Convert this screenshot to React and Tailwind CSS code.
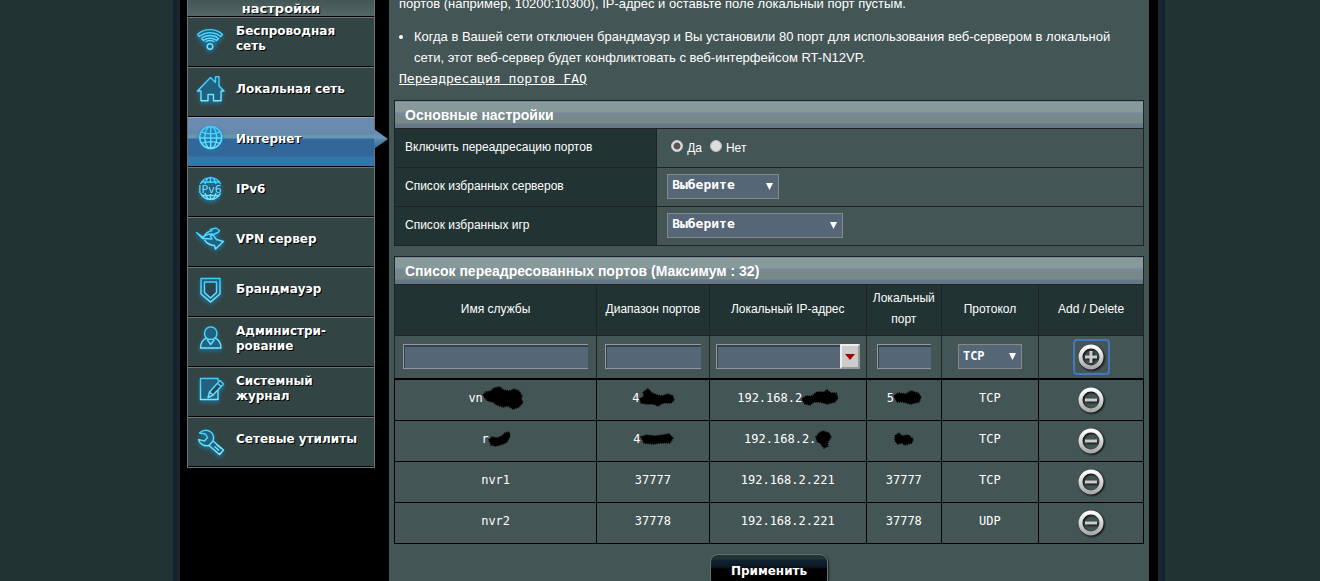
import React, { useState } from 'react';
import clsx from 'clsx';

const ICON_STROKE = 'url(#icon-line)';

const icons = {
    wifi: (
        <>
            <path d="M1 8 Q14 -1 27 8 L16 24 L12 24 Z" fill="#1d5f80" fillOpacity="0.55" stroke="none" />
            <path d="M1.5 8.5 C8 2 20 2 26.5 8.5 L24.5 10.5 C19 5.5 9 5.5 3.5 10.5 Z" />
            <path d="M5.5 12.5 C10 8.5 18 8.5 22.5 12.5 L20.5 14.5 C17 11.5 11 11.5 7.500 14.5 Z" />
            <path d="M9.5 16 C12 14 16 14 18.500 16" />
            <circle cx="14" cy="20.500" r="2.800" />
        </>
    ),
    home: (
        <>
            <path d="M5 12 L14.5 2 L25 12 L25 25 L5 25 Z" fill="#1d5f80" fillOpacity="0.55" stroke="none" />
            <path d="M5 15 H1.500 L14.500 1.500 L19.500 6.500 V0.800 H23 V10 L28 15 H25 V24.800 H17.500 V18.500 H12 V24.800 H5 Z" />
        </>
    ),
    globe: (
        <>
            <circle cx="14.700" cy="11.500" r="11" fill="#1d7fc0" fillOpacity="0.35" />
            <ellipse cx="14.700" cy="11.500" rx="6" ry="11" />
            <path d="M14.700 0.500 V22.500 M5.500 6 C10 8.500 19.500 8.500 24 6 M3.700 12 H25.700 M5.500 17.500 C10 15 19.500 15 24 17.500" />
        </>
    ),
    ipv6: (
        <>
            <circle cx="14.500" cy="12.500" r="11" fill="#1d5f80" fillOpacity="0.55" stroke="none" />
            <path d="M4.500 8 A11 11 0 0 1 24.500 8 M4.500 17 A11 11 0 0 0 24.500 17 M9 8 C10 4 12 1.500 14.500 1.500 C17 1.500 19 4 20 8 M9 17 C10 21 12 23.500 14.500 23.500 C17 23.500 19 21 20 17 M14.500 1.500 V7 M14.500 18 V23.500 M5 6 H24 M5 19.500 H24" />
            <text
                x="14"
                y="16.500"
                textAnchor="middle"
                fill="#77ddff"
                stroke="none"
                className="font-['DejaVu_Sans',sans-serif] text-[11px]"
            >
                IPv6
            </text>
        </>
    ),
    vpn: (
        <>
            <path d="M6 11 L20 2 L23 7 L18 9 L28 14 L20 22 Z" fill="#1d5f80" fillOpacity="0.55" stroke="none" />
            <path d="M0.500 6.500 L6.500 12.500 C8.500 9.500 11 8 15 8 L17.500 8.500 L22 6.500 L23.500 4.500 L20 2 L14.500 3.500 L16 4.500 C11.500 5.500 9 7.500 7.500 11.500 Z" />
            <path d="M6.500 12.500 L16 13 L14.500 10 L17 9 L20.500 13.500 L27.500 15.500 L19.500 23 L18.500 19.500 C13.500 19 10.500 17 8.500 14" />
        </>
    ),
    shield: (
        <>
            <path d="M5 2.500 H24 V18 L14.500 26 L5 18 Z" fill="#1d5f80" fillOpacity="0.55" />
            <path d="M8.500 6 H20.500 V16.500 L14.500 22 L8.500 16.500 Z" fill="#2b4650" />
        </>
    ),
    user: (
        <>
            <path d="M4.500 22 C4.500 16 7 13.500 10.500 12 C7 8.500 8.500 1 14.700 1 C21 1 22.500 8.500 19 12 C22.500 13.500 25 16 25 22 Z" fill="#1d5f80" fillOpacity="0.55" />
            <path d="M10.500 12 C13 13.800 16.500 13.800 19 12 M11 13.500 L14.700 18.500 L18.500 13.500" />
        </>
    ),
    journal: (
        <>
            <path d="M22 12 V23.500 H4.500 V2.500 H22 V5" fill="#1d5f80" fillOpacity="0.55" />
            <path d="M12 21.500 L13.500 16 L24 4.500 L27.500 8 L17 19 Z M21.500 7 L25 10.500 M13.500 16 L17 19" fill="#2b4650" />
        </>
    ),
    wrench: (
        <>
            <path d="M3.500 7 C8 2.500 15 4 17 9 C18 11.500 17.500 13.500 17 15 L27.500 24 L23.500 28.500 L13 19.500 C8.500 20.500 3.500 18 2.500 13.500 L8.500 15 L11.500 11.500 L9.500 8 Z" fill="#1d5f80" fillOpacity="0.55" />
            <path d="M17 15 L13 19.500 M18.500 20.500 L23 24.500 M20.500 18.500 L25 22.500" />
        </>
    ),
};

const menu = [
    { icon: 'wifi', label: 'Беспроводная сеть' },
    { icon: 'home', label: 'Локальная сеть' },
    { icon: 'globe', label: 'Интернет', active: true },
    { icon: 'ipv6', label: 'IPv6' },
    { icon: 'vpn', label: 'VPN сервер' },
    { icon: 'shield', label: 'Брандмауэр' },
    { icon: 'user', label: 'Администри- рование' },
    { icon: 'journal', label: 'Системный журнал' },
    { icon: 'wrench', label: 'Сетевые утилиты' },
];

// Ink blots that hide private values
const blots = {
    wide: { w: 40, h: 22, d: 'M0 8 L3 5 L8 4 L11 1 L17 0 L20 3 L27 4 L31 2 L36 4 L39 9 L38 12 L40 15 L36 20 L30 22 L25 19 L20 20 L14 18 L10 15 L5 14 L2 11 Z' },
    hump: { w: 34, h: 18, d: 'M0 10 L4 7 L3 3 L8 0 L12 4 L17 6 L22 7 L28 5 L33 7 L34 11 L31 14 L23 14 L18 17 L13 15 L7 15 L1 14 Z' },
    tail: { w: 36, h: 16, d: 'M0 9 L4 6 L10 6 L15 2 L22 2 L25 0 L29 3 L34 3 L36 8 L33 12 L25 14 L18 12 L12 12 L8 15 L3 14 Z' },
    oval: { w: 27, h: 13, d: 'M0 5 L4 2 L12 3 L17 0 L24 2 L27 6 L25 11 L17 13 L9 11 L3 11 Z' },
    leaf: { w: 21, h: 14, d: 'M0 8 L3 5 L8 6 L13 4 L16 1 L20 0 L21 4 L18 10 L14 12 L7 14 L2 13 Z' },
    bar: { w: 32, h: 10, d: 'M0 3 L5 1 L14 2 L22 1 L28 0 L32 4 L29 9 L20 9 L12 10 L3 9 Z' },
    ball: { w: 15, h: 17, d: 'M0 6 L3 2 L7 0 L13 2 L15 6 L12 11 L12 15 L8 17 L5 13 L1 10 Z' },
    dot: { w: 18, h: 12, d: 'M0 3 L4 0 L7 3 L13 2 L18 6 L17 10 L10 12 L7 10 L3 11 L0 8 Z' },
};

const rows = [
    { name: 'vn', nameBlot: 'wide', range: '4', rangeBlot: 'hump', ip: '192.168.2', ipBlot: 'tail', port: '5', portBlot: 'oval', proto: 'TCP' },
    { name: 'r', nameBlot: 'leaf', range: '4', rangeBlot: 'bar', ip: '192.168.2.', ipBlot: 'ball', port: '', portBlot: 'dot', proto: 'TCP' },
    { name: 'nvr1', range: '37777', ip: '192.168.2.221', port: '37777', proto: 'TCP' },
    { name: 'nvr2', range: '37778', ip: '192.168.2.221', port: '37778', proto: 'UDP' },
];

const MenuIcon = ({ name }) => (
    <svg
        viewBox="0 0 30 32"
        fill="none"
        stroke={ICON_STROKE}
        strokeWidth="1.4"
        strokeLinejoin="round"
        className="w-[30px] h-8 shrink-0 overflow-visible drop-shadow-[0_2px_2px_#1a7fb0]"
        aria-hidden="true"
    >
        {icons[name]}
    </svg>
);

const MenuItem = ({ icon, label, active }) => (
    <li>
        <a
            href="#"
            className={clsx(
                'relative flex items-center gap-[10px] h-[50px] pl-2 pr-4 border-t border-b border-b-black',
                active
                    ? 'border-t-[#8fa8c0] bg-[linear-gradient(#6b8bb0_0_10px,#6688aa_16px,#6699aa_17px,#6699b0_20px,#336699_21px_38px,#3377aa_39px)]'
                    : 'border-t-[#6b7777] bg-[#334444]'
            )}
        >
            <MenuIcon name={icon} />
            <span className="pb-[6px] text-[12px] leading-[15px] font-bold [text-shadow:1px_1px_0_#000]">{label}</span>
            {active && (
                <svg viewBox="0 0 14 20" className="absolute -right-[14px] top-[11px] w-[14px] h-5" aria-hidden="true">
                    <path d="M0 0 L14 10 L0 20 Z" fill="url(#pointer)" />
                </svg>
            )}
        </a>
    </li>
);

const TableTitle = ({ colSpan, children }) => (
    <tr className="h-7">
        <th
            colSpan={colSpan}
            className="border border-[#222222] px-[10px] text-left text-[14px] leading-5 font-black bg-[linear-gradient(#8899aa_0_2px,#889999_2px_11px,#778899_11px_14px,#778888_14px_22px,#667788_22px)]"
        >
            {children}
        </th>
    </tr>
);

const Select = ({ id, label, options, className }) => (
    <span className={clsx('relative inline-block align-middle font-bold font-[\'DejaVu_Sans_Mono\',monospace]', className)}>
        <select
            id={id}
            aria-label={label}
            className="block w-full h-[25px] pl-1 pb-[2px] appearance-none border border-[#888888] bg-[#556677] text-white"
        >
            {options.map((option) => (
                <option key={option}>{option}</option>
            ))}
        </select>
        <svg viewBox="0 0 7 7" className="absolute right-[6px] top-[9px] size-[7px] pointer-events-none" aria-hidden="true">
            <path d="M0 0 H7 L3.500 7 Z" fill="#fff" />
        </svg>
    </span>
);

const Field = ({ label }) => (
    <input
        type="text"
        aria-label={label}
        className="block w-full min-w-0 h-[25px] px-1 border border-r-0 border-[#9a93a8] bg-[#556677] shadow-[inset_1px_2px_0_#334444]"
    />
);

const RoundIcon = ({ plus }) => (
    <svg viewBox="0 0 28 28" className="size-7 shrink-0 drop-shadow-[1px_1px_1px_#000]" aria-hidden="true">
        <circle cx="14" cy="14" r="10.5" fill="none" stroke="url(#chrome)" strokeWidth="4" />
        <rect x="8" y="12.5" width="12" height="3" fill="#cccccc" />
        {plus && <rect x="12.5" y="8" width="3" height="12" fill="#cccccc" />}
    </svg>
);

const Cell = ({ text, blot }) => {
    const shape = blots[blot];
    return (
        <td className="border border-black pb-1">
            <span className="flex items-center justify-center">
                {text}
                {shape && (
                    <svg width={shape.w} height={shape.h} className="overflow-visible -my-1" aria-hidden="true">
                        <path d={shape.d} fill="#000" stroke="#000" strokeWidth="1.5" strokeDasharray="1 1" />
                    </svg>
                )}
            </span>
        </td>
    );
};

const Radio = ({ label, ...props }) => (
    <label className="flex items-center gap-1">
        <input
            type="radio"
            name="forwarding"
            className="appearance-none size-3 mb-1 rounded-full bg-[#dddddd] border border-[#bbbbbb] checked:bg-[radial-gradient(circle,#555555_3px,#e4e4e4_4px)]"
            {...props}
        />
        {label}
    </label>
);

const Defs = () => (
    <svg width="0" height="0" className="absolute" aria-hidden="true">
        <defs>
            <linearGradient id="icon-line" gradientUnits="userSpaceOnUse" x1="0" y1="0" x2="0" y2="28">
                <stop offset="0" stopColor="#33ccff" />
                <stop offset="1" stopColor="#88eeff" />
            </linearGradient>
            <linearGradient id="pointer" x1="0" y1="0" x2="0" y2="1">
                <stop offset="0" stopColor="#6688aa" />
                <stop offset="0.45" stopColor="#6699bb" />
                <stop offset="0.55" stopColor="#5588aa" />
                <stop offset="1" stopColor="#336699" />
            </linearGradient>
            <linearGradient id="chrome" x1="0" y1="0" x2="0" y2="1">
                <stop offset="0" stopColor="#ffffff" />
                <stop offset="1" stopColor="#aaaaaa" />
            </linearGradient>
        </defs>
    </svg>
);

const Sidebar = () => (
    <nav className="w-[188px] shrink-0 font-['DejaVu_Sans',sans-serif]">
        <h2 className="flex items-end justify-center h-[17px] border-x border-x-[#6b7777] border-b border-b-black bg-[linear-gradient(#445555,#556666)] text-[13px] leading-[14px] font-bold [text-shadow:1px_1px_0_#000]">
            настройки
        </h2>
        <ul className="border-x border-b border-[#6b7777]">
            {menu.map((item) => (
                <MenuItem key={item.icon} {...item} />
            ))}
        </ul>
    </nav>
);

const BasicSettings = () => {
    const [enabled, setEnabled] = useState(true);

    return (
        <table className="w-full mt-[11px] table-fixed border-collapse">
            <colgroup>
                <col className="w-[35%]" />
                <col />
            </colgroup>
            <thead>
                <TableTitle colSpan={2}>Основные настройки</TableTitle>
            </thead>
            <tbody>
                <tr className="h-[39px]">
                    <th className="border border-[#222222] bg-[#223333] px-[10px] pb-[2px] text-left font-normal">Включить переадресацию портов</th>
                    <td className="border border-[#222222] px-[10px]">
                        <div className="flex items-center gap-2 pl-1">
                            <Radio label="Да" checked={enabled} onChange={() => setEnabled(true)} />
                            <Radio label="Нет" checked={!enabled} onChange={() => setEnabled(false)} />
                        </div>
                    </td>
                </tr>
                <tr className="h-[39px]">
                    <th className="border border-[#222222] bg-[#223333] px-[10px] pb-[2px] text-left font-normal">
                        <label htmlFor="servers">Список избранных серверов</label>
                    </th>
                    <td className="border border-[#222222] px-[10px] pb-[2px] text-[13px]">
                        <Select id="servers" options={['Выберите']} className="w-28" />
                    </td>
                </tr>
                <tr className="h-[39px]">
                    <th className="border border-[#222222] bg-[#223333] px-[10px] pb-[2px] text-left font-normal">
                        <label htmlFor="games">Список избранных игр</label>
                    </th>
                    <td className="border border-[#222222] px-[10px] pb-[2px] text-[13px]">
                        <Select id="games" options={['Выберите']} className="w-44" />
                    </td>
                </tr>
            </tbody>
        </table>
    );
};

const columns = ['Имя службы', 'Диапазон портов', 'Локальный IP-адрес', 'Локальный порт', 'Протокол', 'Add / Delete'];

const PortList = () => (
    <table className="w-full mt-[10px] table-fixed border-collapse text-center">
        <colgroup>
            <col className="w-[27%]" />
            <col className="w-[15%]" />
            <col className="w-[21%]" />
            <col className="w-[10%]" />
            <col className="w-[13%]" />
            <col className="w-[14%]" />
        </colgroup>
        <thead>
            <TableTitle colSpan={6}>Список переадресованных портов (Максимум : 32)</TableTitle>
            <tr className="h-[51px]">
                {columns.map((column) => (
                    <th key={column} className="border border-[#222222] bg-[#223333] pb-[2px] leading-[21px] font-normal">
                        {column}
                    </th>
                ))}
            </tr>
        </thead>
        <tbody className="font-['DejaVu_Sans_Mono',monospace] text-[12px]">
            <tr className="h-[43px]">
                <td className="border border-[#222222] px-2"><Field label="Имя службы" /></td>
                <td className="border border-[#222222] px-2"><Field label="Диапазон портов" /></td>
                <td className="border border-[#222222] px-[6px]">
                    <div className="flex">
                        <Field label="Локальный IP-адрес" />
                        <button
                            type="button"
                            aria-label="Выбрать клиента"
                            className="flex items-center justify-center w-5 h-[25px] shrink-0 border-2 border-t-[#eeeeee] border-l-[#eeeeee] border-r-[#999999] border-b-[#999999] bg-[#cccccc]"
                        >
                            <svg viewBox="0 0 10 6" className="w-[10px] h-[6px]" aria-hidden="true">
                                <path d="M0 0 H10 L5 6 Z" fill="#aa0000" />
                            </svg>
                        </button>
                    </div>
                </td>
                <td className="border border-[#222222] px-[10px]"><Field label="Локальный порт" /></td>
                <td className="border border-[#222222]">
                    <Select label="Протокол" options={['TCP', 'UDP']} className="w-16" />
                </td>
                <td className="border border-[#222222]">
                    <button type="button" aria-label="Add" className="flex items-center justify-center mx-auto w-[37px] h-9 border-2 border-[#4477bb] rounded-sm">
                        <RoundIcon plus />
                    </button>
                </td>
            </tr>
            {rows.map((row, i) => (
                <tr key={i} className={i === 0 ? 'h-[42px] border-t-2 border-t-black' : 'h-[41px]'}>
                    <Cell text={row.name} blot={row.nameBlot} />
                    <Cell text={row.range} blot={row.rangeBlot} />
                    <Cell text={row.ip} blot={row.ipBlot} />
                    <Cell text={row.port} blot={row.portBlot} />
                    <Cell text={row.proto} />
                    <td className="border border-black">
                        <button type="button" aria-label="Delete" className="block mx-auto">
                            <RoundIcon />
                        </button>
                    </td>
                </tr>
            ))}
        </tbody>
    </table>
);

export default function App() {
    return (
        <div className="h-screen overflow-hidden pl-[18px] bg-[#223333] text-white text-[12px] font-['Liberation_Sans',sans-serif]">
            <Defs />
            <div className="flex max-w-[992px] min-h-full mx-auto bg-black border-x-4 border-[#142233]">
                <div className="w-[3px] shrink-0 bg-[#1c2628]" />
                <div className="flex grow items-start pl-[7px] pr-[9px]">
                    <Sidebar />
                    <main className="grow min-w-0 ml-[14px] min-h-screen px-[5px] bg-[#445555]">
                        <div className="-mt-[7px] pl-[5px] pr-4 text-[13px] leading-[21px]">
                            <p>портов (например, 10200:10300), IP-адрес и оставьте поле локальный порт пустым.</p>
                            <ul className="mt-3 pl-[15px] list-disc">
                                <li>
                                    Когда в Вашей сети отключен брандмауэр и Вы установили 80 порт для использования веб-сервером в локальной
                                    сети, этот веб-сервер будет конфликтовать с веб-интерфейсом RT-N12VP.
                                </li>
                            </ul>
                            <a href="#" className="block w-fit underline font-['DejaVu_Sans_Mono',monospace]">
                                Переадресация портов FAQ
                            </a>
                        </div>
                        <BasicSettings />
                        <PortList />
                        <button
                            type="button"
                            className="block mx-auto mt-[10px] w-[118px] h-[33px] rounded-lg border border-[#667070] bg-[linear-gradient(#223333_0_4px,#112233_5px,#0a1a22_12px,#000_14px)] font-bold font-['DejaVu_Sans',sans-serif] shadow-[1px_1px_2px_#222]"
                        >
                            Применить
                        </button>
                    </main>
                </div>
                <div className="w-[3px] shrink-0 bg-[#1c2628]" />
            </div>
        </div>
    );
}
